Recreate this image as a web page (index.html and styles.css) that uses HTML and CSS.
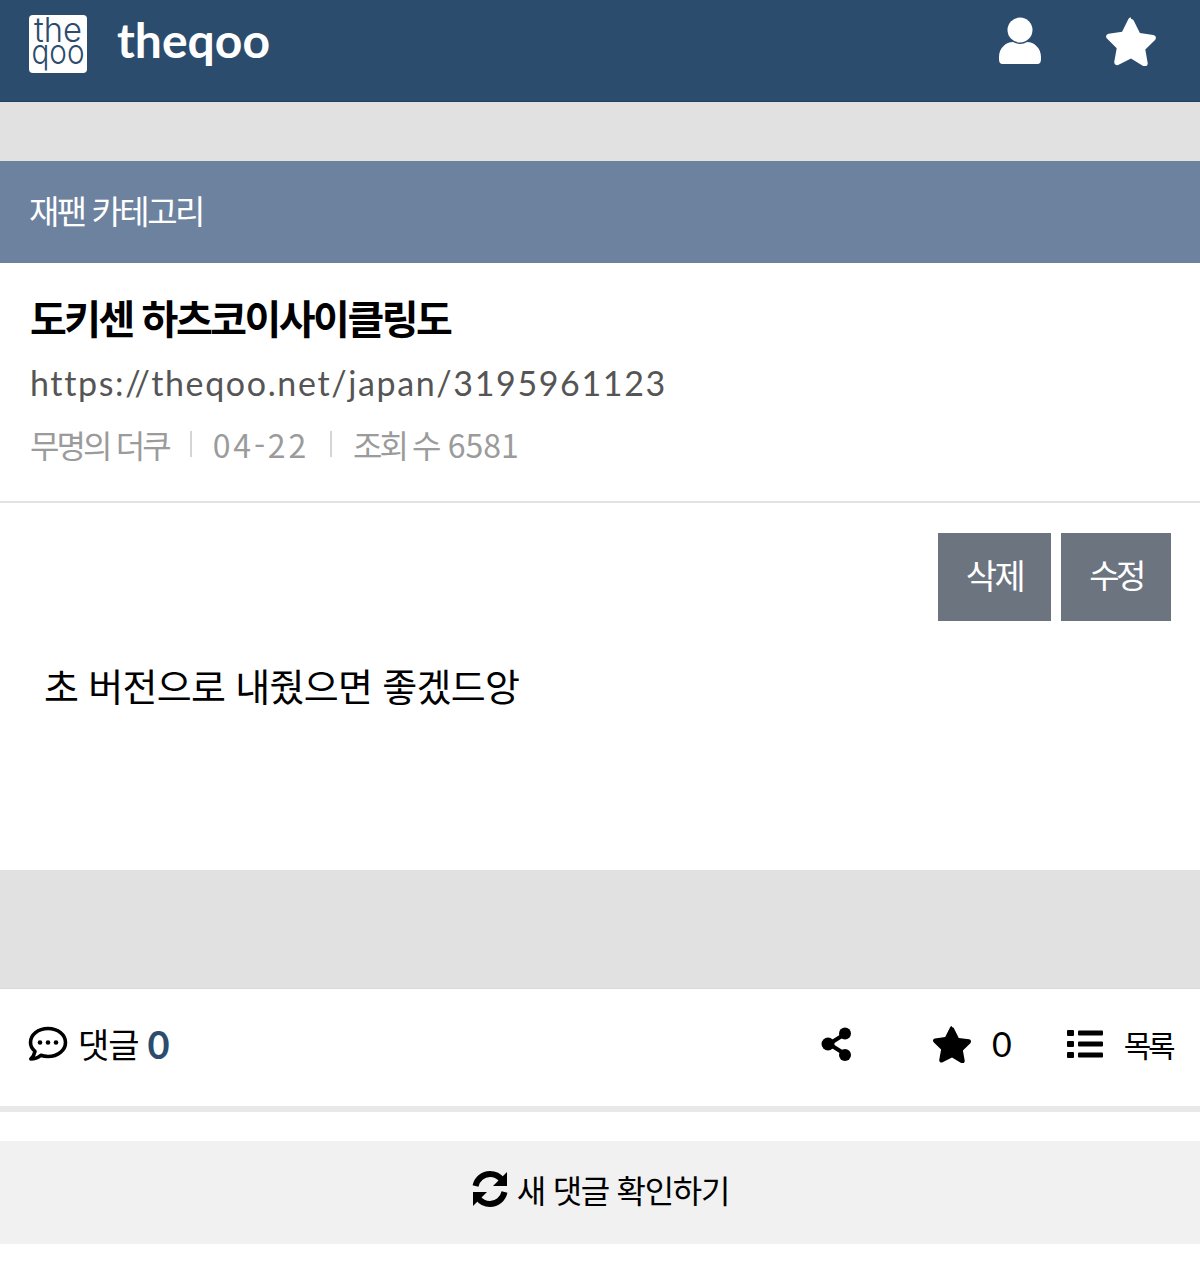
FILE: index.html
```html
<!DOCTYPE html>
<html lang="ko">
<head>
	<meta charset="UTF-8">
	<title>theqoo</title>
	<link rel="stylesheet" href="styles.css">
</head>
<body>

<header class="topbar">
	<div class="brand">
		<svg class="brand-icon" width="60" height="60" viewBox="0 0 60 60">
			<rect x="1" y="1" width="58" height="58" rx="4" fill="#fff"/>
			<text x="30" y="28" class="brand-icon-text" text-anchor="middle" textLength="48" lengthAdjust="spacingAndGlyphs">the</text>
			<text x="30" y="50" class="brand-icon-text" text-anchor="middle" textLength="53" lengthAdjust="spacingAndGlyphs">qoo</text>
		</svg>
		<span class="brand-name">theqoo</span>
	</div>
	<div class="topbar-icons">
		<svg width="44" height="50" viewBox="0 0 44 50">
			<circle cx="22" cy="14" r="12.500" fill="#fff"/>
			<path d="M1 41c0-9 7-15 14-15 2 1 4.500 2 7 2s5-1 7-2c7 0 14 6 14 15v2c0 3-1 5-4 5H5c-3 0-4-2-4-5z" fill="#fff"/>
		</svg>
		<svg width="52" height="50" viewBox="0 0 24 23">
			<path d="M12 1.300c.6 0 1 .3 1.300 .9l2.800 5.600 6.200 .9c1.200 .2 1.600 1.500 .8 2.300l-4.500 4.400 1.100 6.200c.2 1.200-1 2-2 1.500L12 19.600l-5.700 2.900c-1 .5-2.200-.3-2-1.500l1.100-6.200-4.500-4.400c-.8-.8-.4-2.100 .8-2.300l6.200-.9 2.800-5.600c.3-.6 .7-.9 1.300-.9z" fill="#fff"/>
		</svg>
	</div>
</header>

<div class="spacer-top"></div>

<div class="category">재팬 카테고리</div>

<section class="post-head">
	<h1 class="post-title">도키센 하츠코이사이클링도</h1>
	<div class="post-url">https://theqoo.net/japan/3195961123</div>
	<div class="post-meta">
		<span>무명의 더쿠</span><i class="sep"></i><span class="meta-date">04-22</span><i class="sep"></i><span>조회 수 <span class="meta-count">6581</span></span>
	</div>
</section>

<section class="post-body">
	<div class="post-actions">
		<button class="btn btn-del">삭제</button>
		<button class="btn btn-edit">수정</button>
	</div>
	<p class="post-text">초 버전으로 내줬으면 좋겠드앙</p>
</section>

<div class="spacer-mid"></div>

<div class="tools">
	<div class="tools-left">
		<svg width="40" height="36" viewBox="0 0 40 36">
			<path d="M20 2.500c10 0 17.500 6.300 17.500 14s-7.500 14-17.500 14c-2.600 0-5-.4-7.200-1.200-2.400 2-5.500 3.700-10 3.700 2.200-2.200 3.700-5 4.200-7.700C4 22.800 2.500 19.800 2.500 16.500c0-7.700 7.500-14 17.500-14z" fill="none" stroke="#000" stroke-width="3.600" stroke-linejoin="round"/>
			<circle cx="12" cy="16.500" r="2.300"/><circle cx="20" cy="16.500" r="2.300"/><circle cx="28" cy="16.500" r="2.300"/>
		</svg>
		<span class="tools-label">댓글</span>
		<b class="tools-count">0</b>
	</div>
	<div class="tools-right">
		<svg class="tool-share" width="34" height="36" viewBox="0 0 34 36">
			<path d="M25 8L9 18l16 10" fill="none" stroke="#000" stroke-width="4"/>
			<circle cx="25" cy="7.500" r="6"/><circle cx="8" cy="18" r="6.500"/><circle cx="25" cy="29" r="6"/>
		</svg>
		<svg class="tool-star" width="40" height="38" viewBox="0 0 24 23">
			<path d="M12 1.300c.6 0 1 .3 1.300 .9l2.800 5.600 6.200 .9c1.200 .2 1.600 1.500 .8 2.300l-4.500 4.400 1.100 6.200c.2 1.200-1 2-2 1.500L12 19.600l-5.700 2.900c-1 .5-2.200-.3-2-1.500l1.100-6.200-4.500-4.400c-.8-.8-.4-2.100 .8-2.300l6.200-.9 2.800-5.600c.3-.6 .7-.9 1.300-.9z"/>
		</svg>
		<span class="tool-num">0</span>
		<svg class="tool-list" width="38" height="30" viewBox="0 0 38 30">
			<rect x="1" y="1" width="7" height="6" rx="1"/><rect x="1" y="12" width="7" height="6" rx="1"/><rect x="1" y="23" width="7" height="6" rx="1"/>
			<rect x="12" y="1.500" width="25" height="5" rx="1"/><rect x="12" y="12.500" width="25" height="5" rx="1"/><rect x="12" y="23.500" width="25" height="5" rx="1"/>
		</svg>
		<span class="tool-text">목록</span>
	</div>
</div>

<div class="refresh">
	<svg width="38" height="38" viewBox="0 0 38 38">
		<path d="M4.500 16C6 9 12 4 19 4c5 0 9 2 12 6" fill="none" stroke="#000" stroke-width="6"/>
		<path d="M36 2v14H22z"/>
		<path d="M33.500 22C32 29 26 34 19 34c-5 0-9-2-12-6" fill="none" stroke="#000" stroke-width="6"/>
		<path d="M2 36V22h14z"/>
	</svg>
	<span>새 댓글 확인하기</span>
</div>

</body>
</html>
```

FILE: styles.css
```css
body {
	font-family: "Noto Sans CJK KR", "Noto Sans", sans-serif;
	margin: 0;
	padding: 0;
	background: #fff;
	color: #000;
}

.topbar {
	height: 87px;
	background: #2c4c6e;
	border-bottom: 1px solid #243f5c;
	display: flex;
	align-items: center;
	justify-content: space-between;
	padding: 0 43px 14px 28px;
}
.brand {
	display: flex;
	align-items: center;
	gap: 29px;
}
.brand-icon {
	display: block;
	overflow: visible;
}
.brand-icon-text {
	font-family: "Inter", sans-serif;
	font-size: 34px;
	font-weight: 300;
	fill: #2c4c6e;
}
.brand-name {
	font-family: "Lato", sans-serif;
	font-size: 48px;
	font-weight: 700;
	color: #fff;
	line-height: 60px;
	margin-bottom: 8px;
}
.topbar-icons {
	display: flex;
	align-items: center;
	gap: 63px;
	margin-bottom: 5px;
}

.spacer-top {
	height: 59px;
	background: #e1e1e1;
}

.category {
	height: 102px;
	line-height: 98px;
	padding-left: 29px;
	background: #6d829f;
	color: #fff;
	font-size: 33px;
	letter-spacing: -2.500px;
}

.post-head {
	height: 240px;
	box-sizing: border-box;
	padding: 27px 30px 0;
	border-bottom: 2px solid #e2e2e2;
}
.post-title {
	margin: 0;
	font-size: 40px;
	line-height: 54px;
	font-weight: 700;
	letter-spacing: -2.500px;
}
.post-url {
	margin-top: 14px;
	font-family: "Lato", sans-serif;
	font-size: 34px;
	line-height: 50px;
	color: #555;
	letter-spacing: 1.630px;
}
.post-meta {
	margin-top: 11px;
	display: flex;
	align-items: center;
	font-size: 32px;
	line-height: 50px;
	color: #9b9b9b;
	letter-spacing: -2.900px;
}
.meta-date {
	letter-spacing: 2.800px;
}
.meta-count {
	letter-spacing: 0;
	margin-left: 3px;
}
.sep {
	width: 2px;
	height: 26px;
	margin: 0 21px;
	background: #d5d5d5;
}

.post-body {
	height: 367px;
	box-sizing: border-box;
	padding: 30px 29px 0 44px;
}
.post-actions {
	display: flex;
	justify-content: flex-end;
	gap: 10px;
}
.btn {
	height: 88px;
	border: 0;
	padding: 0 0 6px;
	background: #6c7480;
	color: #fff;
	font-family: inherit;
	font-size: 34px;
	letter-spacing: -2.500px;
}
.btn-del {
	width: 113px;
}
.btn-edit {
	width: 110px;
	font-size: 33px;
	letter-spacing: -3.500px;
}
.post-text {
	margin: 36px 0 0;
	font-size: 38px;
	line-height: 56px;
	letter-spacing: -0.700px;
}

.spacer-mid {
	height: 118px;
	background: #e1e1e1;
	border-bottom: 1px solid #d9d9d9;
}

.tools {
	height: 109px;
	border-bottom: 6px solid #e8e8e8;
	display: flex;
	align-items: center;
	justify-content: space-between;
	padding: 0 28px 8px;
}
.tools-left {
	display: flex;
	align-items: center;
	gap: 10px;
}
.tools-label {
	font-size: 34px;
	letter-spacing: -1px;
}
.tools-count {
	font-family: "Lato", sans-serif;
	font-size: 38px;
	color: #2c4c6e;
	margin-left: -1px;
}
.tools-right {
	display: flex;
	align-items: center;
}
.tool-num {
	font-family: "Lato", sans-serif;
	font-size: 34px;
	margin-left: 20px;
}
.tool-star {
	margin-left: 78px;
}
.tool-list {
	margin-left: 54px;
}
.tool-text {
	font-size: 30px;
	margin-left: 20px;
	letter-spacing: -3.500px;
}

.refresh {
	margin-top: 29px;
	height: 103px;
	box-sizing: border-box;
	padding-bottom: 7px;
	background: #f1f1f1;
	display: flex;
	align-items: center;
	justify-content: center;
	gap: 8px;
	font-size: 32px;
	letter-spacing: -1.300px;
}
```
